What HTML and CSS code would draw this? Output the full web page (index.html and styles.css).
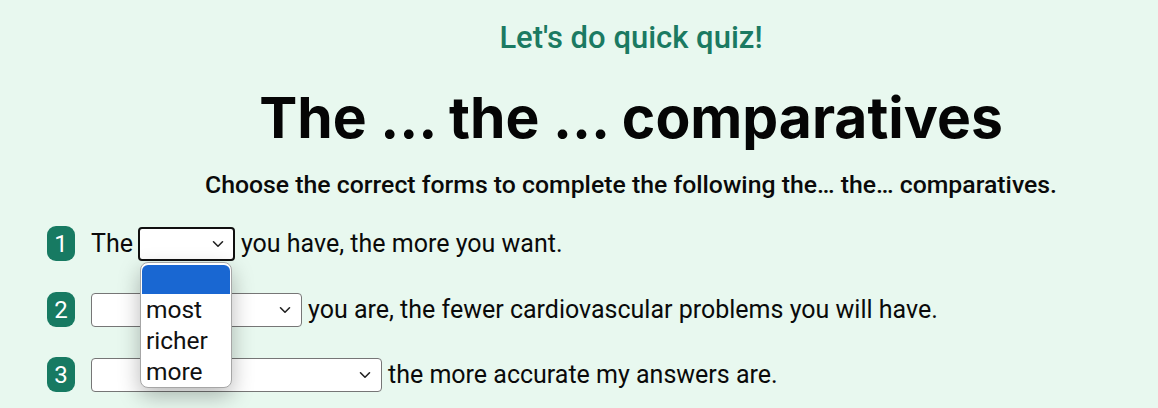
FILE: index.html
```html
<!DOCTYPE html>
<html lang="en">
<head>
<meta charset="utf-8">
<title>Quiz</title>
<link rel="stylesheet" href="styles.css">
</head>
<body>
<header class="head">
  <p class="kicker">Let's do quick quiz!</p>
  <h1 class="title">The … the … comparatives</h1>
  <p class="lead">Choose the correct forms to complete the following the… the… comparatives.</p>
</header>
<ol class="quiz">
  <li class="q">
    <span class="num">1</span>
    <span class="txt">The</span>
    <span class="sel-wrap">
      <select class="sel sel-s focused"><option></option><option>most</option><option>richer</option><option>more</option></select>
      <div class="popup">
        <div class="opt opt-active">&nbsp;</div>
        <div class="opt">most</div>
        <div class="opt">richer</div>
        <div class="opt">more</div>
      </div>
    </span>
    <span class="txt">you have, the more you want.</span>
  </li>
  <li class="q">
    <span class="num">2</span>
    <select class="sel sel-m"><option></option></select>
    <span class="txt">you are, the fewer cardiovascular problems you will have.</span>
  </li>
  <li class="q">
    <span class="num">3</span>
    <select class="sel sel-l"><option></option></select>
    <span class="txt">the more accurate my answers are.</span>
  </li>
</ol>
</body>
</html>
```

FILE: styles.css
```css
html, body {
  margin: 0;
  padding: 0;
}
body {
  background: #e8f8ef;
  font-family: Roboto, "Liberation Sans", sans-serif;
  color: #111;
  width: 1158px;
  height: 408px;
  overflow: hidden;
}
.head {
  padding-left: 104px;
  text-align: center;
}
.kicker {
  margin: 0;
  padding-top: 18px;
  font-size: 31px;
  font-weight: 500;
  color: #1b7a62;
  line-height: 40px;
}
.title {
  margin: 0;
  margin-top: 25px;
  font-family: Inter, "Open Sans", sans-serif;
  font-weight: 700;
  font-size: 57px;
  line-height: 70px;
  color: #050505;
}
.lead {
  margin: 0;
  margin-top: 16px;
  font-size: 24.8px;
  font-weight: 500;
  line-height: 32px;
  color: #0a0a0a;
}
.quiz {
  list-style: none;
  margin: 0;
  padding: 25px 0 0 47px;
  display: flex;
  flex-direction: column;
  gap: 30px;
}
.q {
  display: flex;
  align-items: center;
  height: 35px;
}
.q:nth-child(2) { margin-top: 1px; }
.num {
  width: 28px;
  height: 35px;
  border-radius: 9px;
  background: #177a62;
  color: #fff;
  font-size: 24px;
  display: flex;
  align-items: center;
  justify-content: center;
  margin-right: 16px;
}
.txt {
  font-size: 25px;
  line-height: 32px;
  color: #0a0a0a;
}
.sel-wrap {
  position: relative;
  display: inline-flex;
  margin: 0 6px 0 5px;
}
.sel {
  appearance: none;
  -webkit-appearance: none;
  height: 34px;
  background-color: #fff;
  background-image: url("data:image/svg+xml,%3Csvg xmlns='http://www.w3.org/2000/svg' width='12' height='8' viewBox='0 0 12 8'%3E%3Cpath d='M1.5 1.8 L6 6.2 L10.5 1.8' fill='none' stroke='%23222' stroke-width='1.6' stroke-linecap='round' stroke-linejoin='round'/%3E%3C/svg%3E");
  background-repeat: no-repeat;
  background-position: right 10px center;
  background-size: 12px 8px;
  border: 1px solid #767676;
  border-radius: 4px;
  font-size: 20px;
  margin-right: 6px;
}
.sel-wrap .sel { margin-right: 0; }
.sel-s { width: 97px; background-position: right 9px center; }
.sel-m { width: 211px; }
.sel-l { width: 291px; }
.focused {
  border: 2px solid #101010;
}
.popup {
  position: absolute;
  left: 2px;
  top: 35px;
  width: 90px;
  background: #fff;
  border: 1px solid #a6a6a6;
  border-radius: 8px;
  box-shadow: 0 8px 22px rgba(0, 0, 0, 0.28);
  overflow: hidden;
  padding: 2px 0 0;
}
.opt {
  font-size: 24.5px;
  line-height: 31px;
  padding-left: 5px;
  color: #111;
}
.opt-active {
  background: #1967d2;
  height: 29px;
  margin: 0 1px;
  border-radius: 6px 6px 0 0;
}
```
